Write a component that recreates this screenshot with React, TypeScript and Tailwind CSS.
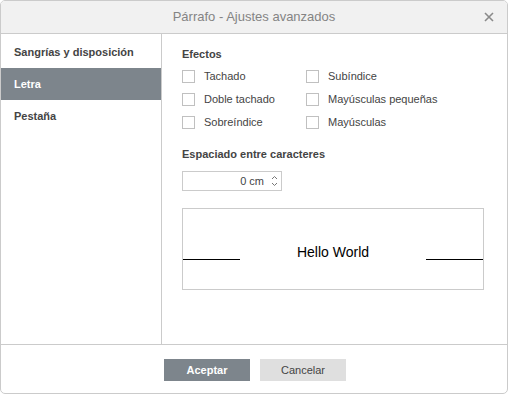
import React from 'react';

const font = { fontFamily: '"Liberation Sans", Arial, sans-serif' };

const Check = ({ label }: { label: string }) => (
  <div className="flex h-[23px] items-center">
    <span className="h-[13px] w-[13px] shrink-0 border border-[#c0c0c0] bg-white" />
    <span className="ml-[9px] text-[11px] text-[#444]">{label}</span>
  </div>
);

export default function App() {
  const sections = ['Sangrías y disposición', 'Letra', 'Pestaña'];

  return (
    <div className="h-[394px] w-[509px] bg-white" style={font}>
      <div className="flex h-[394px] w-[508px] flex-col overflow-hidden rounded-[5px] border border-[#cbcbcb]">
        {/* header */}
        <div className="relative flex h-[33px] shrink-0 items-center justify-center border-b border-[#cbcbcb] bg-[#f1f1f1]">
          <span className="text-[13px] text-[#848484]">Párrafo - Ajustes avanzados</span>
          <svg className="absolute right-[13px] top-[11px]" width="10" height="10" viewBox="0 0 10 10">
            <path d="M1 1 L9 9 M9 1 L1 9" stroke="#8a8a8a" strokeWidth="1.6" />
          </svg>
        </div>

        {/* body */}
        <div className="flex h-[311px] shrink-0 border-b border-[#cbcbcb]">
          <div className="w-[161px] shrink-0 border-r border-[#cbcbcb] pt-[2px]">
            {sections.map((s) => (
              <div
                key={s}
                className={
                  'flex h-[32px] items-center pl-[13px] text-[11px] font-bold ' +
                  (s === 'Letra' ? 'bg-[#7d858c] text-white' : 'text-[#444]')
                }
              >
                {s}
              </div>
            ))}
          </div>

          <div className="flex-1 pl-[20px] pt-[13px]">
            <div className="h-[14px] text-[11px] font-bold leading-[14px] text-[#444]">Efectos</div>
            <div className="mt-[4px] flex">
              <div className="w-[124px]">
                <Check label="Tachado" />
                <Check label="Doble tachado" />
                <Check label="Sobreíndice" />
              </div>
              <div>
                <Check label="Subíndice" />
                <Check label="Mayúsculas pequeñas" />
                <Check label="Mayúsculas" />
              </div>
            </div>

            <div className="mt-[13px] h-[14px] text-[11px] font-bold leading-[14px] text-[#444]">
              Espaciado entre caracteres
            </div>
            <div className="mt-[10px] flex h-[20px] w-[100px] items-center justify-end border border-[#cbcbcb] pr-[3px]">
              <span className="text-[11px] text-[#444]">0 cm</span>
              <svg className="ml-[7px]" width="7" height="14" viewBox="0 0 7 14">
                <path d="M1 5 L3.5 2.5 L6 5" fill="none" stroke="#777" strokeWidth="1" />
                <path d="M1 9 L3.5 11.5 L6 9" fill="none" stroke="#777" strokeWidth="1" />
              </svg>
            </div>

            <div className="mt-[17px] flex h-[82px] w-[302px] items-center justify-between border border-[#cbcbcb]">
              <div className="mt-[21px] h-px w-[57px] bg-black" />
              <span className="mt-[7px] text-[14px] text-black">Hello World</span>
              <div className="mt-[21px] h-px w-[57px] bg-black" />
            </div>
          </div>
        </div>

        {/* footer */}
        <div className="flex flex-1 items-start justify-center gap-[10px] pl-[2px] pt-[14px]">
          <button className="h-[22px] w-[86px] bg-[#7d858c] text-[11px] font-bold text-white">Aceptar</button>
          <button className="h-[22px] w-[86px] bg-[#dfdfdf] text-[11px] text-[#444]">Cancelar</button>
        </div>
      </div>
    </div>
  );
}
